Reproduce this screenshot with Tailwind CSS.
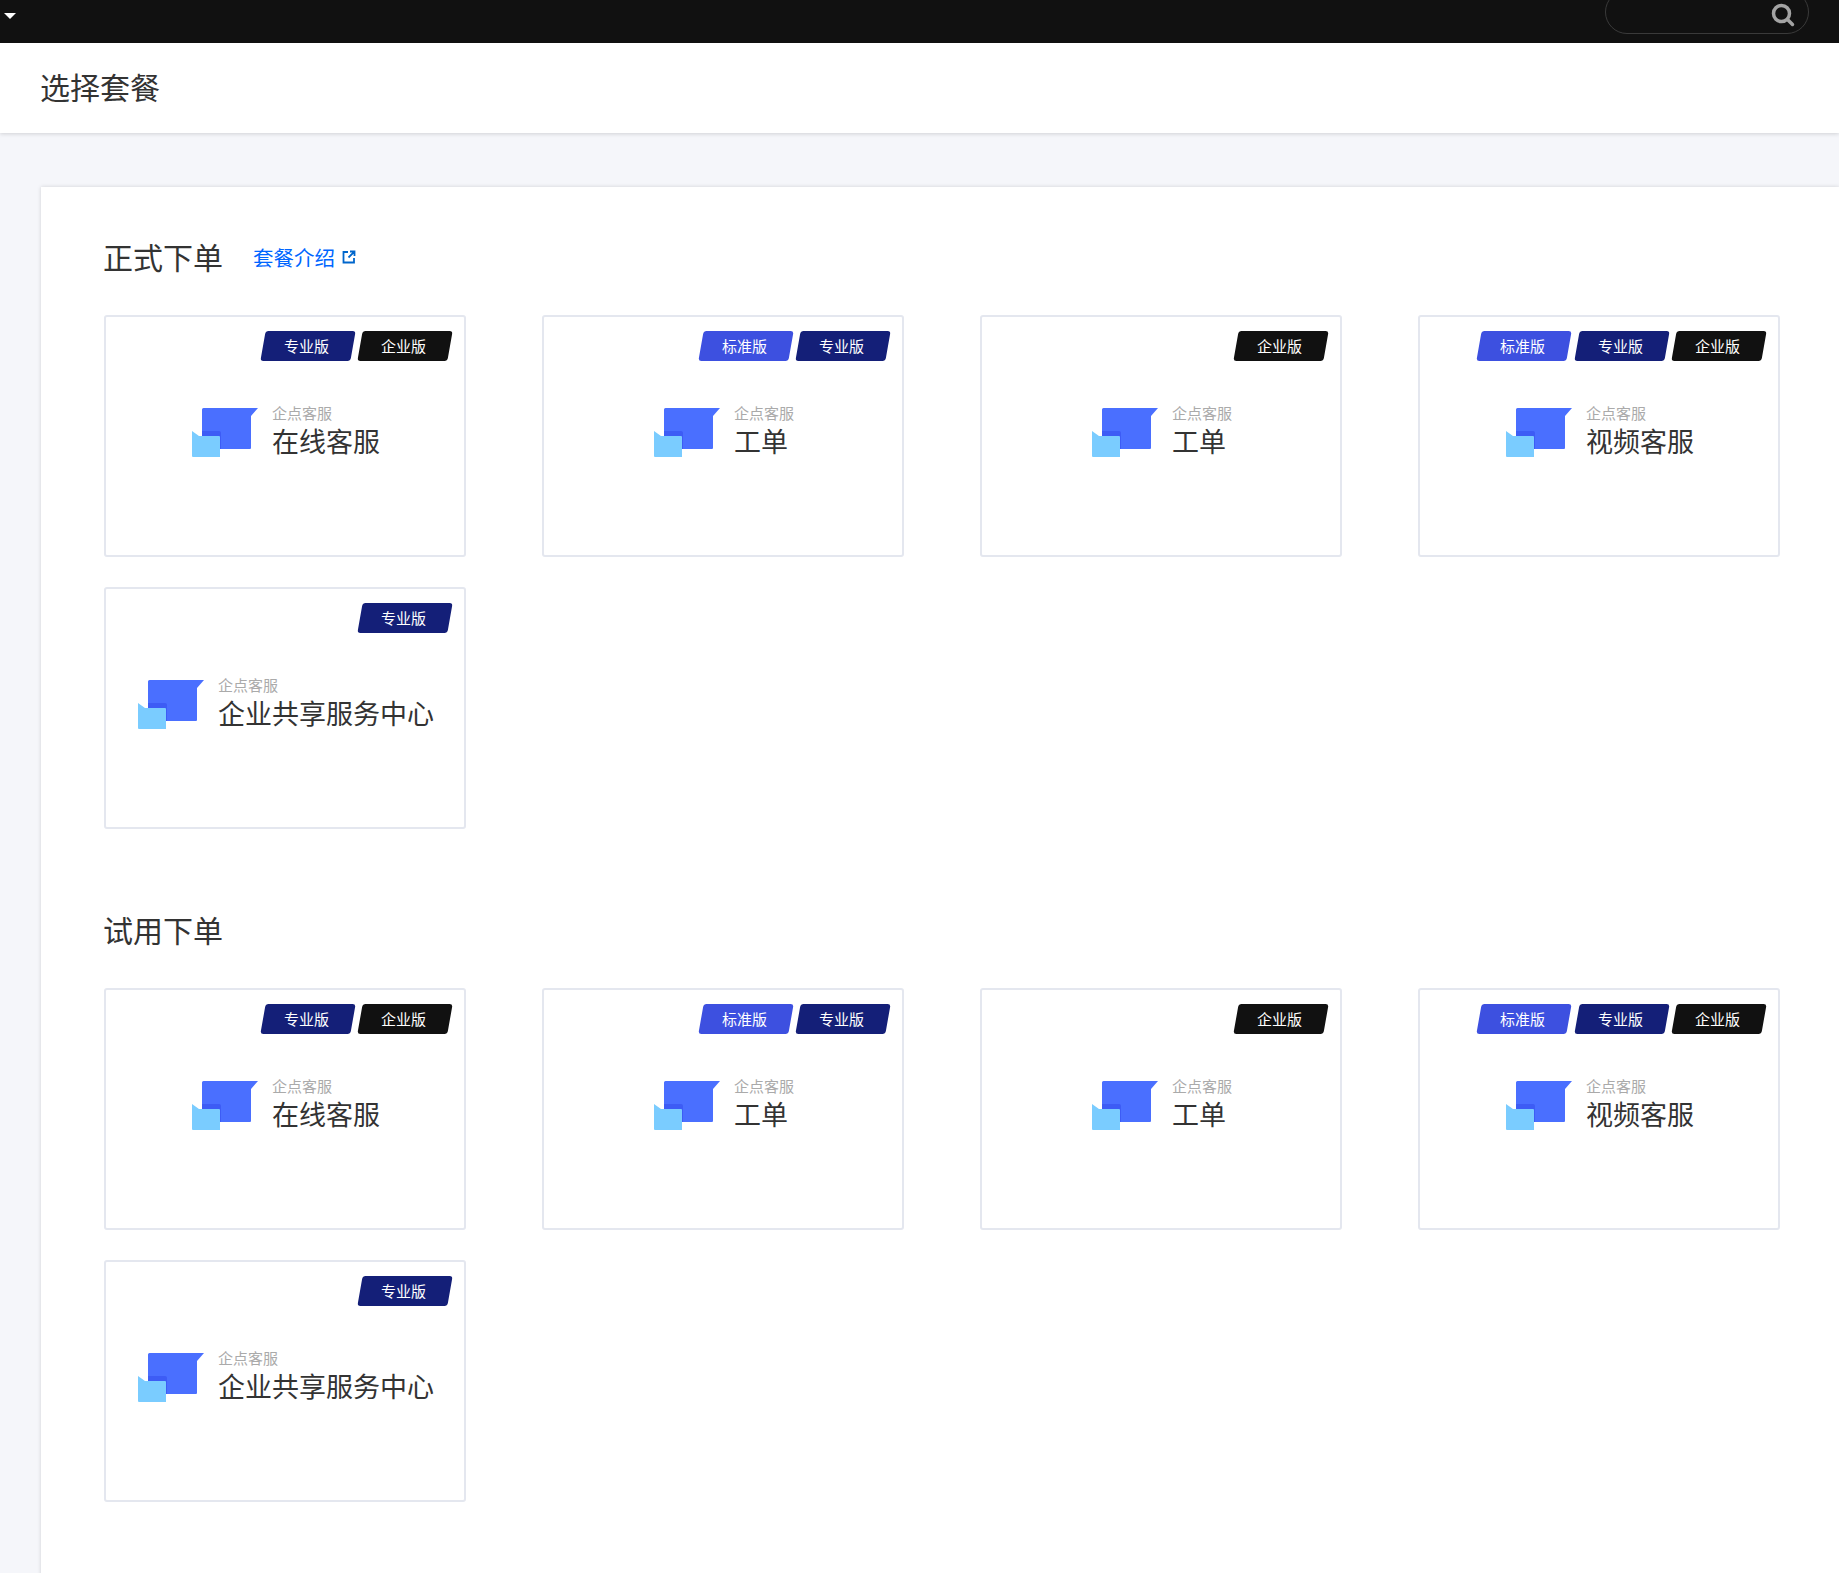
<!DOCTYPE html>
<html lang="zh-CN">
<head>
	<meta charset="UTF-8">
	<title>选择套餐</title>
	<script src="https://cdn.jsdelivr.net/npm/@tailwindcss/browser@4"></script>
</head>
<body class="bg-[#f5f6fa] overflow-hidden h-[1573px] font-['Noto_Sans_CJK_SC','Liberation_Sans',sans-serif] text-[#333]">
	<div class="h-[43px] bg-[#111] flex items-end justify-between pb-[9px] pr-[30px] overflow-hidden">
		<div class="w-0 h-0 ml-[4px] mb-[15px] border-x-[6px] border-x-transparent border-t-[6px] border-t-white"></div>
		<div class="w-[204px] h-[44px] shrink-0 border border-[#3a3a3a] rounded-[22px] flex items-start justify-end pt-[12px] pr-[13px]">
			<svg width="24" height="24" viewBox="0 0 24 24" fill="none" stroke="#a3a3a3" stroke-width="3.500"><circle cx="10.500" cy="10.500" r="8"/><path d="M16.500 16.500l5 5" stroke-linecap="round"/></svg>
		</div>
	</div>
	<div class="h-[90px] bg-white shadow-[0_1px_4px_rgba(0,0,0,0.15)] pl-[40px] pb-[4px] flex items-center text-[30px] font-normal">选择套餐</div>
	<div class="ml-[41px] mt-[54px] bg-white shadow-[0_0_4px_rgba(0,0,0,0.15)] pl-[62px] pt-[48px] h-[1400px]">
		<div class="flex items-center h-[42px]">
			<span class="text-[30px] leading-[42px]">正式下单</span>
			<a class="ml-[30px] mt-[2px] text-[20.500px] text-[#0066ff] flex items-center gap-[7px]" href="#">套餐介绍
				<svg width="14" height="14" viewBox="0 0 14 14" fill="none" stroke="#0066cc" stroke-width="1.800"><path d="M6 2H1.500v10.500h10.500V8M8 1.500h4.500V6M12.500 1.500L6.500 7.500"/></svg>
			</a>
		</div>
		<div id="formal" class="mt-[38px] ml-[1px] grid grid-cols-[repeat(4,362px)] gap-x-[76px] gap-y-[30px]"></div>
		<div class="flex items-center h-[42px] mt-[79px]">
			<span class="text-[30px] leading-[42px]">试用下单</span>
		</div>
		<div id="trial" class="mt-[38px] ml-[1px] grid grid-cols-[repeat(4,362px)] gap-x-[76px] gap-y-[30px]"></div>
	</div>
<script>
const badges = {
	std: `<div class="w-[90px] h-[30px] -skew-x-[10deg] rounded-[3px] bg-[#3d50e0] text-white text-[15px] flex items-center justify-center"><span class="skew-x-[10deg] -translate-x-[1px]">标准版</span></div>`,
	pro: `<div class="w-[90px] h-[30px] -skew-x-[10deg] rounded-[3px] bg-[#141f78] text-white text-[15px] flex items-center justify-center"><span class="skew-x-[10deg] -translate-x-[1px]">专业版</span></div>`,
	ent: `<div class="w-[90px] h-[30px] -skew-x-[10deg] rounded-[3px] bg-[#111] text-white text-[15px] flex items-center justify-center"><span class="skew-x-[10deg] -translate-x-[1px]">企业版</span></div>`,
};
const products = [
	{ name: "在线客服", tags: ["pro", "ent"] },
	{ name: "工单", tags: ["std", "pro"] },
	{ name: "工单", tags: ["ent"] },
	{ name: "视频客服", tags: ["std", "pro", "ent"] },
	{ name: "企业共享服务中心", tags: ["pro"] },
];
const logo = `<svg width="66" height="49" viewBox="0 0 66 49" class="shrink-0">
	<path d="M10 1.500a1.500 1.500 0 0 1 1.500-1.500H66l-7 8v32a1 1 0 0 1-1 1H10z" fill="#4a6fff"/>
	<path d="M10 23h17a2 2 0 0 1 2 2v16H10z" fill="#3d5cf5"/>
	<path d="M0 23l7 5h20a1 1 0 0 1 1 1v20H1a1 1 0 0 1-1-1z" fill="#7accff"/>
</svg>`;

function card(p) {
	return `<div class="h-[242px] bg-white border-2 border-[#e4e7ef] rounded-[3px] pt-[14px] pr-[12px]">
		<div class="flex justify-end gap-[7.500px] pr-[2px]">${p.tags.map(t => badges[t]).join("")}</div>
		<div class="flex items-center justify-center gap-[14px] mt-[44px] pl-[14px]">
			${logo}
			<div class="-mt-[1px]">
				<div class="text-[15px] leading-[18px] text-[#aaa]">企点客服</div>
				<div class="text-[27px] leading-[38px]">${p.name}</div>
			</div>
		</div>
	</div>`;
}
document.getElementById("formal").innerHTML = products.map(card).join("");
document.getElementById("trial").innerHTML = products.map(card).join("");
</script>
</body>
</html>
